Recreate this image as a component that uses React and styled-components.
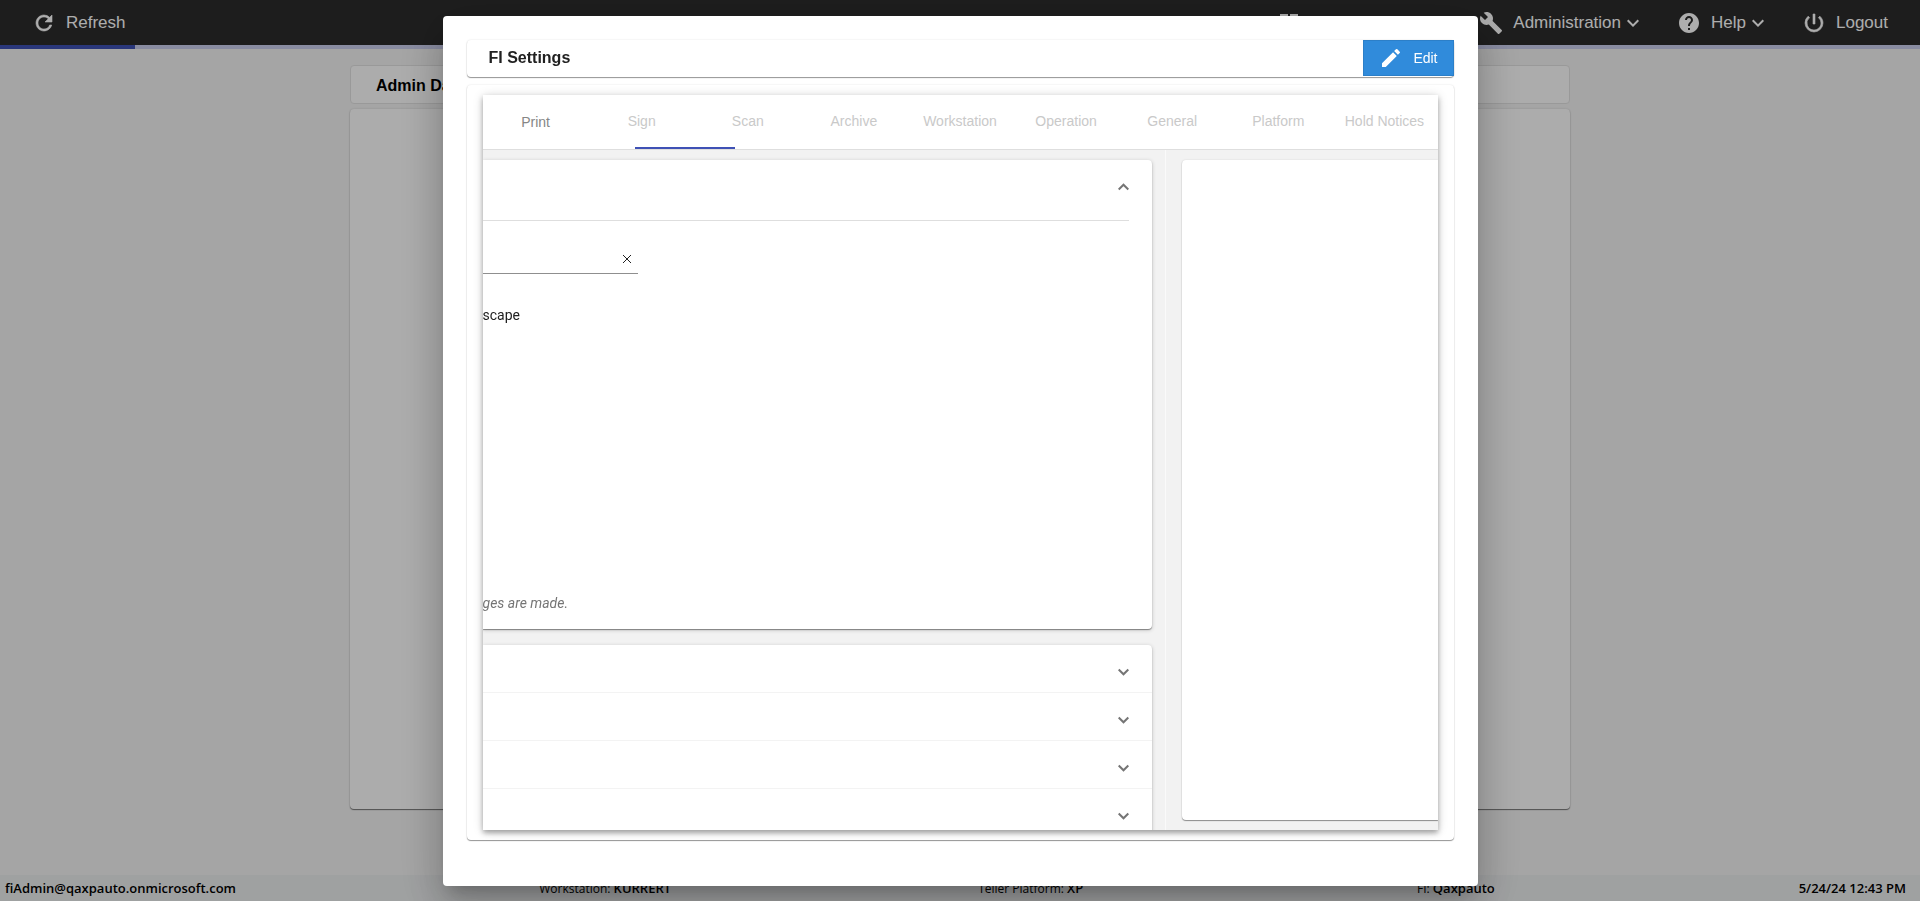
import React from 'react';
import styled, { createGlobalStyle } from 'styled-components';
import {
  MdBuild,
  MdDashboard,
  MdEdit,
  MdExpandMore,
  MdHelp,
  MdPowerSettingsNew,
  MdRefresh,
} from 'react-icons/md';

const GlobalStyle = createGlobalStyle`
  * {
    box-sizing: border-box;
  }

  body {
    margin: 0;
    background: #f3f3f3;
    font-family: 'Liberation Sans', Arial, sans-serif;
    font-size: 14px;
  }

  button {
    padding: 0;
    border: none;
    background: none;
    color: inherit;
    font: inherit;
    cursor: pointer;
  }
`;

const Page = styled.div`
  display: flex;
  flex-direction: column;
  height: 100vh;
  overflow: hidden;
`;

const TopBar = styled.header`
  display: flex;
  justify-content: space-between;
  flex: none;
  height: 45px;
  padding: 0 32px;
  background: #2c2c2c;
  color: #fff;
`;

const Nav = styled.nav`
  display: flex;
  gap: 32px;
`;

const NavButton = styled.button`
  display: flex;
  align-items: center;
  min-width: ${(props) => props.$minWidth || 'auto'};
  font-size: 17px;

  svg {
    width: 24px;
    height: 24px;
  }

  path:not([fill='none']) {
    stroke-width: ${(props) => (props.$heavy ? 0.6 : 0)};
  }
`;

const NavLabel = styled.span`
  margin-left: 10px;
`;

const Progress = styled.div`
  flex: none;
  height: 4px;
  background: #cbcfee;
`;

const ProgressFill = styled.div`
  height: 100%;
  background: #3f51b5;
`;

const Main = styled.main`
  display: flex;
  flex-direction: column;
  flex: 1;
  gap: 5px;
  width: 100%;
  max-width: 1220px;
  margin: 0 auto;
  padding: 16px 0 66px;
`;

const PageTitle = styled.h1`
  margin: 0;
  padding: 2px 25px 0;
  border: 1px solid #e2e2e2;
  border-radius: 4px;
  background: #fefefe;
  font-size: 16px;
  line-height: 35px;
`;

const PageCard = styled.section`
  flex: 1;
  border-radius: 4px;
  background: #fefefe;
  box-shadow: 0 1px 1px rgba(0, 0, 0, 0.5), 0 0 2px rgba(0, 0, 0, 0.15);
`;

const StatusBar = styled.footer`
  display: grid;
  grid-template-columns: 28fr 23fr 23fr 20fr auto;
  flex: none;
  height: 26px;
  padding: 0 14px 0 5px;
  background: #ebedee;
  color: #000;
  font-family: 'Open Sans', 'Noto Sans', sans-serif;
  font-size: 12px;
  line-height: 26px;

  b {
    font-size: 13px;
    font-weight: 600;
  }
`;

const Overlay = styled.div`
  position: fixed;
  inset: 0;
  display: flex;
  align-items: flex-start;
  justify-content: center;
  padding: 16px 0 15px;
  background: rgba(0, 0, 0, 0.32);
`;

const Dialog = styled.div`
  display: flex;
  flex-direction: column;
  gap: 8px;
  width: 1035px;
  max-width: 80vw;
  height: 100%;
  padding: 24px 24px 46px;
  border-radius: 4px;
  background: #fff;
  box-shadow: 0 11px 15px -7px rgba(0, 0, 0, 0.2),
    0 24px 38px 3px rgba(0, 0, 0, 0.14), 0 9px 46px 8px rgba(0, 0, 0, 0.12);
`;

const raised = '0 1px 1px rgba(0, 0, 0, 0.4), 0 0 2px rgba(0, 0, 0, 0.12)';

const DialogHeader = styled.div`
  display: flex;
  align-items: flex-start;
  justify-content: space-between;
  flex: none;
  height: 37px;
  padding-left: 22px;
  border-radius: 4px;
  box-shadow: ${raised};
`;

const DialogTitle = styled.h2`
  margin: 0;
  color: #212121;
  font-size: 16px;
  line-height: 36px;
`;

const EditButton = styled.button`
  && {
    display: flex;
    align-items: center;
    gap: 10px;
    height: 36px;
    padding: 0 15px;
    border: 1px solid #2c7fc8;
    background: #308bdb;
    color: #fff;
  }

  svg {
    width: 24px;
    height: 24px;
  }
`;

const Panel = styled.div`
  flex: 1;
  min-height: 0;
  padding: 10px 16px;
  border-radius: 4px;
  box-shadow: ${raised};
`;

const Settings = styled.div`
  display: flex;
  flex-direction: column;
  height: 100%;
  overflow: hidden;
  background: #f2f2f2;
  box-shadow: 0 3px 5px rgba(0, 0, 0, 0.3), 0 1px 10px rgba(0, 0, 0, 0.16);
`;

const Tabs = styled.div`
  position: relative;
  display: flex;
  flex: none;
  height: 55px;
  border-bottom: 1px solid #dedede;
  background: #fff;
`;

const Tab = styled.button`
  && {
    flex: 1 1 0;
    padding-bottom: ${(props) => (props.$active ? 0 : '2px')};
    color: ${(props) => (props.$active ? '#868686' : '#c9c9c9')};
    white-space: nowrap;
  }
`;

const InkBar = styled.div`
  position: absolute;
  bottom: 0;
  left: 16%;
  width: 100px;
  height: 2px;
  background: #3f51b5;
`;

const Content = styled.div`
  display: grid;
  grid-template-columns: 5fr 2fr;
  flex: 1;
  min-height: 0;
`;

const Column = styled.div`
  display: flex;
  flex-direction: column;
  gap: 16px;
  min-height: 0;
  padding: 10px 13px 0 0;
  overflow: hidden;
`;

const SideColumn = styled.div`
  display: flex;
  padding: 10px 0 10px 16px;
  border-left: 1px solid #fafafa;
`;

const SideCard = styled.div`
  flex: 1;
  border-radius: 4px 0 0 4px;
  background: #fff;
  box-shadow: ${raised};
`;

const Card = styled.section`
  flex: none;
  height: ${(props) => props.$height || 'auto'};
  border-radius: 0 4px 4px 0;
  background: #fff;
  box-shadow: 0 1px 1px rgba(0, 0, 0, 0.4), 0 1px 4px rgba(0, 0, 0, 0.2);
`;

const CardHeader = styled.div`
  display: flex;
  align-items: center;
  justify-content: flex-end;
  height: 61px;
  margin-right: 23px;
  padding-bottom: 6px;
  border-bottom: 1px solid #dedede;
`;

const Toggle = styled.button`
  display: flex;
  color: #757575;
`;

const Row = styled.div`
  display: flex;
  align-items: center;
  justify-content: flex-end;
  height: 48px;
  padding: 6px 23px 0 0;
  border-bottom: 1px solid #f3f3f3;
`;

const Field = styled.div`
  display: flex;
  align-items: flex-end;
  width: 155px;
  height: 53px;
  border-bottom: 1px solid #8f8f8f;
`;

const FieldInput = styled.input`
  flex: 1;
  min-width: 0;
  height: 28px;
  border: none;
  outline: none;
  background: none;
`;

const ClearButton = styled.button`
  && {
    display: flex;
    padding: 10px 7px;
    color: #212121;
  }
`;

const Orientation = styled.div`
  padding-top: 31px;
  color: #212121;
  font-family: Roboto, sans-serif;
  line-height: 20px;
`;

const Note = styled.p`
  margin: 0;
  padding-top: 268px;
  color: #757575;
  font-family: Roboto, sans-serif;
  font-style: italic;
  line-height: 20px;
`;

const tabs = [
  'Print',
  'Sign',
  'Scan',
  'Archive',
  'Workstation',
  'Operation',
  'General',
  'Platform',
  'Hold Notices',
];

const sections = ['one', 'two', 'three', 'four'];

const Chevron = ({ up }) => (
  <svg width="11" height="8" viewBox="0 0 11 8" fill="none" stroke="currentColor" strokeWidth="2">
    <path d={up ? 'M.7 6.5 5.5 1.7l4.8 4.8' : 'M.7 1.5 5.5 6.3l4.8-4.8'} />
  </svg>
);

const App = () => {
  return (
    <>
      <GlobalStyle />
      <Page>
        <TopBar>
          <NavButton $heavy>
            <MdRefresh />
            <NavLabel>Refresh</NavLabel>
          </NavButton>
          <Nav>
            <NavButton $minWidth="170px" aria-label="Dashboard">
              <MdDashboard />
            </NavButton>
            <NavButton>
              <MdBuild />
              <NavLabel>Administration</NavLabel>
              <MdExpandMore />
            </NavButton>
            <NavButton>
              <MdHelp />
              <NavLabel>Help</NavLabel>
              <MdExpandMore />
            </NavButton>
            <NavButton $heavy>
              <MdPowerSettingsNew />
              <NavLabel>Logout</NavLabel>
            </NavButton>
          </Nav>
        </TopBar>
        <Progress>
          <ProgressFill style={{ width: '7.05%' }} />
        </Progress>
        <Main>
          <PageTitle>Admin Dashboard</PageTitle>
          <PageCard />
        </Main>
        <StatusBar>
          <b>fiAdmin@qaxpauto.onmicrosoft.com</b>
          <span>
            Workstation: <b>KURRERT</b>
          </span>
          <span>
            Teller Platform: <b>XP</b>
          </span>
          <span>
            FI: <b>Qaxpauto</b>
          </span>
          <b>5/24/24 12:43 PM</b>
        </StatusBar>
      </Page>
      <Overlay>
        <Dialog role="dialog" aria-labelledby="settings-title">
          <DialogHeader>
            <DialogTitle id="settings-title">FI Settings</DialogTitle>
            <EditButton>
              <MdEdit />
              Edit
            </EditButton>
          </DialogHeader>
          <Panel>
            <Settings>
              <Tabs role="tablist">
                {tabs.map((tab, index) => (
                  <Tab key={tab} role="tab" aria-selected={index === 0} $active={index === 0}>
                    {tab}
                  </Tab>
                ))}
                <InkBar />
              </Tabs>
              <Content>
                <Column>
                  <Card $height="469px">
                    <CardHeader>
                      <Toggle aria-label="Collapse">
                        <Chevron up />
                      </Toggle>
                    </CardHeader>
                    <Field>
                      <FieldInput aria-label="Printer" />
                      <ClearButton aria-label="Clear">
                        <svg width="8" height="8" viewBox="0 0 8 8" stroke="currentColor">
                          <path d="M0 0l8 8M8 0L0 8" />
                        </svg>
                      </ClearButton>
                    </Field>
                    <Orientation>scape</Orientation>
                    <Note>ges are made.</Note>
                  </Card>
                  <Card>
                    {sections.map((section) => (
                      <Row key={section}>
                        <Toggle aria-label={`Expand section ${section}`}>
                          <Chevron />
                        </Toggle>
                      </Row>
                    ))}
                  </Card>
                </Column>
                <SideColumn>
                  <SideCard />
                </SideColumn>
              </Content>
            </Settings>
          </Panel>
        </Dialog>
      </Overlay>
    </>
  );
};

export default App;
